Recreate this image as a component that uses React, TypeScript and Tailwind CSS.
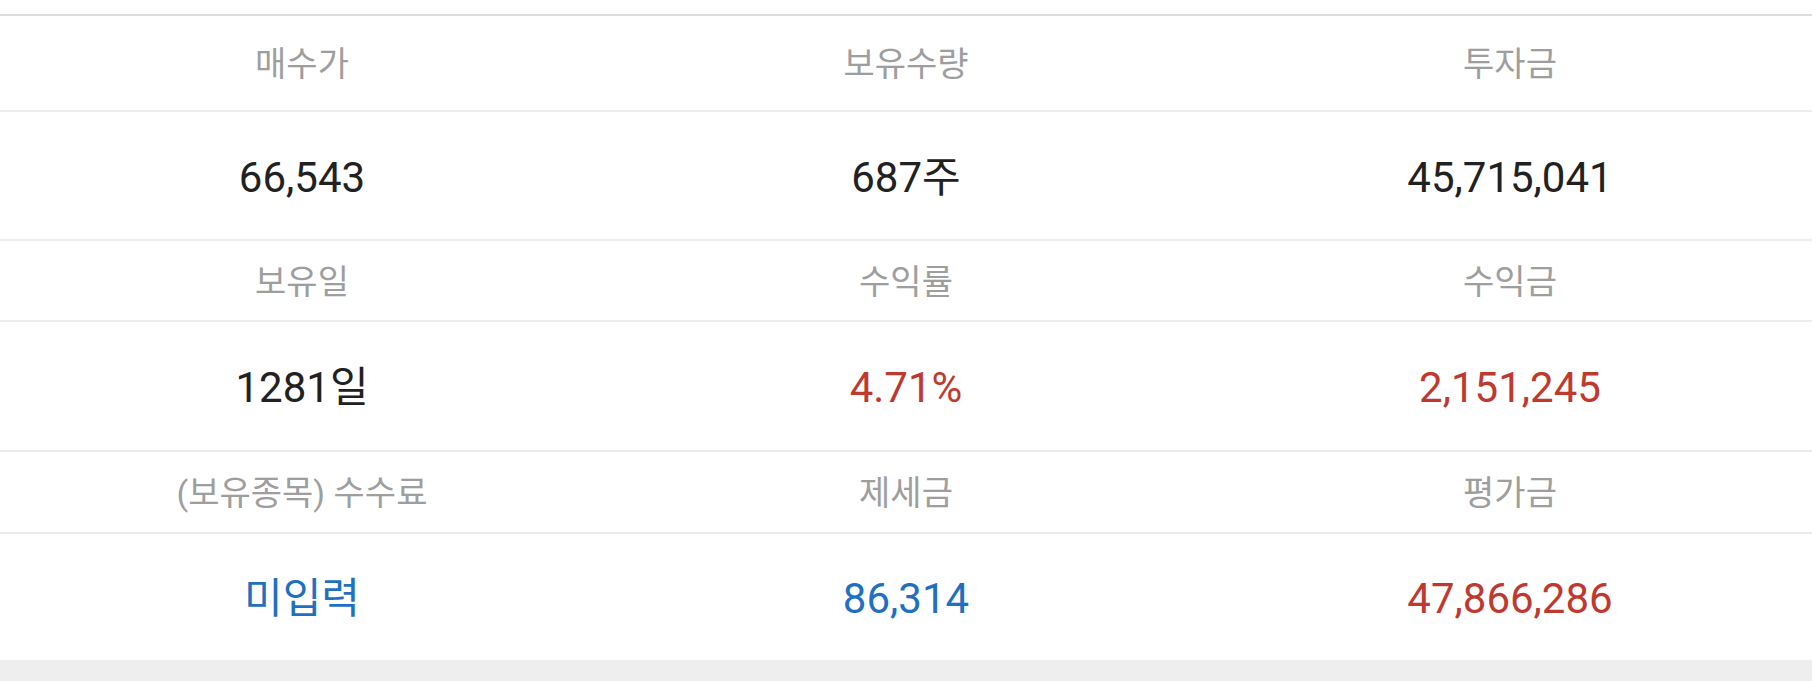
const rows = [
  {
    labels: ['매수가', '보유수량', '투자금'],
    values: [
      { text: '66,543', tone: 'text-[#212121]' },
      { text: '687주', tone: 'text-[#212121]' },
      { text: '45,715,041', tone: 'text-[#212121]' },
    ],
    labelH: 'h-[96px]',
    valueH: 'h-[129px]',
  },
  {
    labels: ['보유일', '수익률', '수익금'],
    values: [
      { text: '1281일', tone: 'text-[#212121]' },
      { text: '4.71%', tone: 'text-[#c0392f]' },
      { text: '2,151,245', tone: 'text-[#c0392f]' },
    ],
    labelH: 'h-[81px]',
    valueH: 'h-[130px]',
  },
  {
    labels: ['(보유종목) 수수료', '제세금', '평가금'],
    values: [
      { text: '미입력', tone: 'text-[#1f70c1]' },
      { text: '86,314', tone: 'text-[#1f70c1]' },
      { text: '47,866,286', tone: 'text-[#c0392f]' },
    ],
    labelH: 'h-[82px]',
    valueH: 'h-[126px]',
  },
]

export default function App() {
  return (
    <div className="flex flex-col w-full h-[681px] bg-white pt-[14px] font-['Roboto','Noto_Sans_CJK_KR',sans-serif]">
      <div className="border-t-2 border-[#dddddd]">
        {rows.map((row, i) => (
          <div key={i}>
            {/* Label row */}
            <div className={`grid grid-cols-3 border-b-2 border-[#ececec] ${row.labelH}`}>
              {row.labels.map((label) => (
                <div key={label} className="flex items-center justify-center pt-[3px] text-[34px] text-[#9e9e9e]">
                  {label}
                </div>
              ))}
            </div>

            {/* Value row */}
            <div
              className={`grid grid-cols-3 ${row.valueH} ${
                i < rows.length - 1 ? 'border-b-2 border-[#ececec]' : ''
              }`}
            >
              {row.values.map((v) => (
                <div key={v.text} className={`flex items-center justify-center pt-[3px] text-[42px] ${v.tone}`}>
                  {v.text}
                </div>
              ))}
            </div>
          </div>
        ))}
      </div>
      <div className="flex-1 bg-[#eeeeee]"></div>
    </div>
  )
}
